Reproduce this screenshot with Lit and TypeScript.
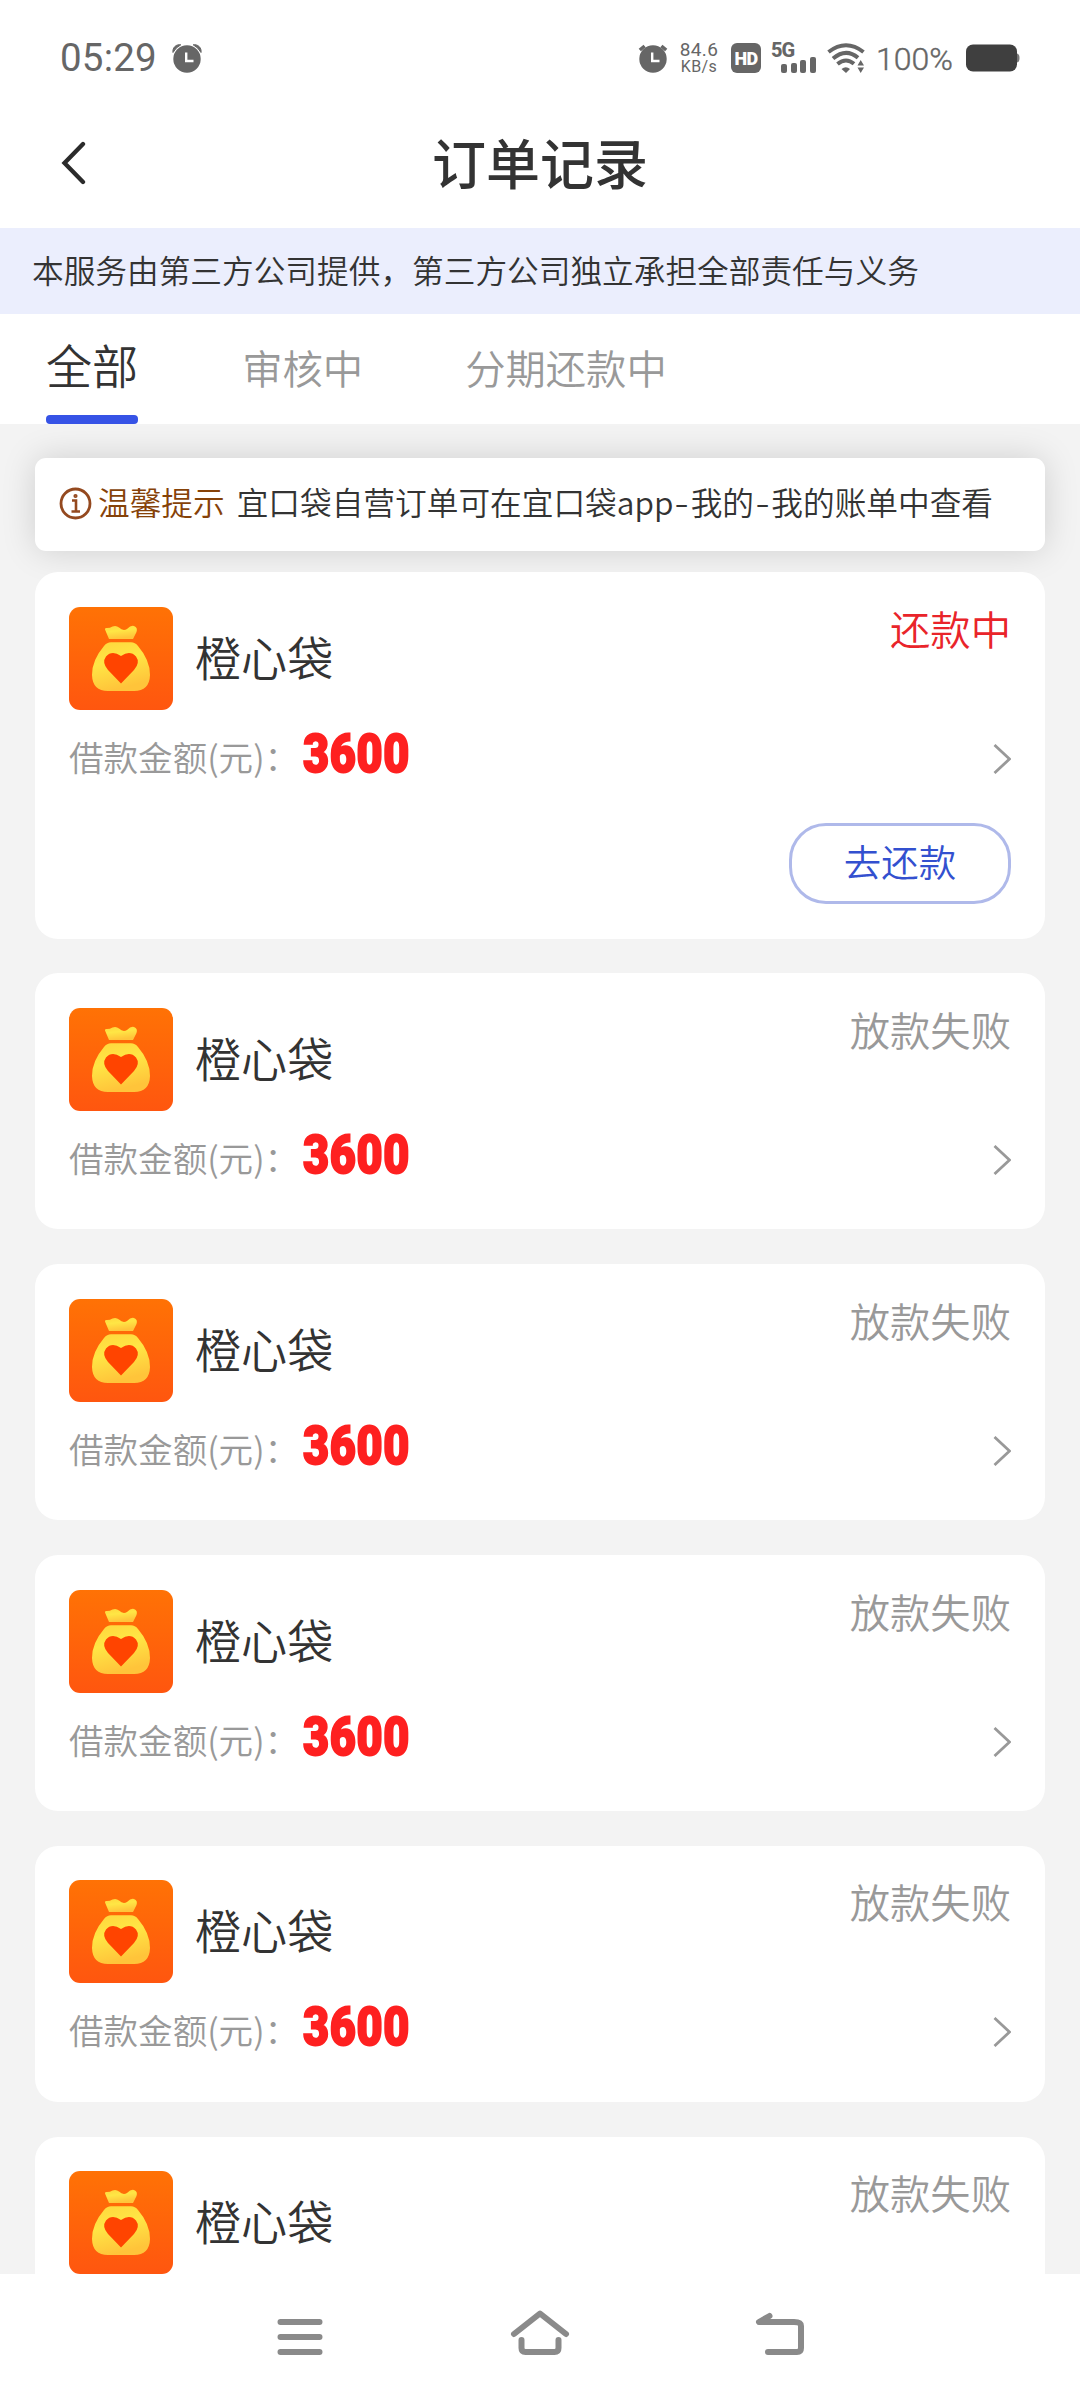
import { css, html, LitElement, nothing, svg } from "lit";
import { customElement, property, state } from "lit/decorators.js";
import { classMap } from "lit/directives/class-map.js";

interface Order {
  name: string;
  amount: number;
  status: string;
  repaying?: boolean;
}

const alarmIcon = (gap: boolean) => svg`
  <circle cx="15" cy="16" r="13.7" fill="currentColor"></circle>
  ${gap
    ? svg`<path d="M1 9.5A6.6 6.6 0 0 1 8.8 1.8Q4 4.2 1 9.5ZM29 9.5A6.6 6.6 0 0 0 21.2 1.8Q26 4.2 29 9.5Z" fill="currentColor" stroke="currentColor"></path>`
    : svg`<path d="M1.8 7 6.6 3M28.2 7 23.4 3" stroke="currentColor" stroke-width="3.4"></path>`}
  <path d="M14.2 9.5V18H21.5" fill="none" stroke="#fff" stroke-width="2.4"></path>
`;

@customElement("status-bar")
export class StatusBar extends LitElement {
  static styles = css`
    :host {
      display: flex;
      align-items: center;
      height: 116px;
      padding: 0 60px 0 60px;
      box-sizing: border-box;
      color: #666;
      font-family: Roboto, sans-serif;
      font-weight: 400;
    }

    svg {
      display: block;
      flex: none;
    }

    .time {
      width: 112px;
      font-size: 38.5px;
      line-height: 40px;
      letter-spacing: 0.2px;
    }

    .spacer {
      flex: 1;
    }

    .speed {
      display: flex;
      flex-direction: column;
      align-items: center;
      width: 42px;
      margin: 0 11px 0 10px;
      font-size: 19px;
      line-height: 17px;
      letter-spacing: 0.4px;
    }

    .speed .unit {
      font-size: 16px;
    }

    .hd {
      width: 30px;
      height: 30px;
      border-radius: 6px;
      background: #666;
      color: #fff;
      font-size: 18px;
      font-weight: 900;
      line-height: 31px;
      text-align: center;
      letter-spacing: -0.6px;
    }

    .signal {
      width: 46px;
      height: 30px;
      margin-left: 10px;
      display: flex;
      flex-direction: column;
    }

    .signal .gen {
      font-size: 20px;
      font-weight: 800;
      line-height: 14px;
      letter-spacing: -1px;
    }

    .bars {
      display: flex;
      align-items: flex-end;
      gap: 3.7px;
      margin-left: 10px;
    }

    .bar {
      width: 6px;
      border-radius: 2px;
      background: currentColor;
    }

    .wifi {
      margin-left: 10px;
    }

    .percent {
      width: 88px;
      margin-left: 11px;
      margin-right: 2px;
      font-size: 32px;
      line-height: 34px;
      padding-top: 2px;
      font-weight: 300;
      -webkit-text-stroke: 0.4px #666;
      box-sizing: border-box;
    }
  `;

  private _bars = [9, 10, 13, 16];

  protected render() {
    return html`
      <span class="time">05:29</span>
      <svg width="30" height="30" viewBox="0 0 30 30">${alarmIcon(true)}</svg>
      <span class="spacer"></span>
      <svg width="30" height="30" viewBox="0 0 30 30">${alarmIcon(false)}</svg>
      <span class="speed"><span>84.6</span><span class="unit">KB/s</span></span>
      <span class="hd">HD</span>
      <span class="signal">
        <span class="gen">5G</span>
        <span class="bars">
          ${this._bars.map((h) => html`<i class="bar" style="height:${h}px"></i>`)}
        </span>
      </span>
      <svg class="wifi" width="38" height="30" viewBox="0 0 38 30" fill="none">
        <path d="M1.500 9Q19 -4.500 36.500 9M6 15.500Q19 4.500 31 14.800M10.500 21Q19 14 27 20.800" stroke="currentColor" stroke-width="4"></path>
        <path d="M14.500 26Q19 22.500 23 26L19 30ZM30.500 22.500 33.700 17 37 22.500ZM30.500 24.500H37L33.700 30Z" fill="currentColor"></path>
      </svg>
      <span class="percent">100%</span>
      <svg width="54" height="28" viewBox="0 0 54 28">
        <path d="M48 9.500h2.500q3 0 3 4.500t-3 4.500H48Z" fill="#777"></path>
        <rect y="0.500" width="51" height="27" rx="7" fill="#3f3f3f"></rect>
      </svg>
    `;
  }
}

@customElement("order-card")
export class OrderCard extends LitElement {
  static styles = css`
    * {
      box-sizing: border-box;
    }

    :host {
      display: flex;
      flex-direction: column;
      height: 256.3px;
      padding: 34.7px 34px 0;
      border-radius: 23px;
      background: #fff;
      flex: none;
    }

    :host([repaying]) {
      height: 366.6px;
    }

    .head {
      display: flex;
      height: 104px;
    }

    .logo {
      display: block;
      flex: none;
    }

    .name {
      flex: 1;
      padding-left: 22px;
      font-size: 46.08px;
      line-height: 98px;
      color: #333;
    }

    .status {
      font-size: 40.32px;
      line-height: 42px;
      color: #999;
    }

    .status.active {
      color: #e9242a;
    }

    .detail {
      display: flex;
      align-items: center;
      height: 96px;
      font-size: 34.56px;
      color: #999;
    }

    .label {
      line-height: 50px;
      width: 234px;
      padding-bottom: 6px;
      white-space: nowrap;
    }

    .amount {
      flex: 1;
      font-family: Roboto, sans-serif;
      font-size: 53px;
      font-weight: 900;
      line-height: 60px;
      letter-spacing: 0.8px;
      color: #fe2020;
      -webkit-text-stroke: 2px #fe2020;
      transform: scaleX(0.85);
      transform-origin: left;
      margin-top: -10px;
    }

    .pay {
      align-self: flex-end;
      width: 222px;
      height: 81px;
      margin-top: 16.3px;
      padding: 0 0 5px;
      border: 3px solid #afb9ea;
      border-radius: 37px;
      background: #fff;
      color: #3350cf;
      font: inherit;
      font-size: 37.44px;
      line-height: 68px;
    }
  `;

  @property({ attribute: false })
  order!: Order;

  protected render() {
    const { name, amount, status, repaying } = this.order;
    return html`
      <div class="head">
        <svg class="logo" width="104" height="103" viewBox="0 0 104 103">
          <defs>
            <linearGradient id="tile" x1="0" y1="0" x2="0" y2="1">
              <stop offset="0" stop-color="#ff7205"></stop>
              <stop offset="1" stop-color="#ff560f"></stop>
            </linearGradient>
            <linearGradient id="bag" x1="0" y1="0" x2="0.300" y2="1">
              <stop offset="0" stop-color="#ffd63c"></stop>
              <stop offset="0.450" stop-color="#ffe645"></stop>
              <stop offset="1" stop-color="#ffc43a"></stop>
            </linearGradient>
          </defs>
          <rect width="104" height="103" rx="11" fill="url(#tile)"></rect>
          <path d="M40 32 36 22.500Q35.500 20.500 38 21Q41 21 43.500 19.500Q47 18 50 20.500Q54 24.500 58 22Q62 18 65 19Q69 20.500 67.500 25L64 32Z" fill="url(#bag)"></path>
          <path d="M42 35.300H62Q66 35.300 69 39Q81 53 81 68Q80.500 84 65 84H39Q23.500 84 23 68Q23 53 35 39Q38 35.300 42 35.300Z" fill="url(#bag)"></path>
          <path d="M52 76.500 39 63Q32.500 55.500 37 49.500Q43 43 52 49Q61 43 67 49.500Q71.500 55.500 65 63Z" fill="#ff4400"></path>
        </svg>
        <span class="name">${name}</span>
        <span class=${classMap({ status: true, active: !!repaying })}>${status}</span>
      </div>
      <div class="detail">
        <span class="label">借款金额(元)：</span>
        <span class="amount">${amount}</span>
        <svg width="18" height="30" viewBox="0 0 18 30" fill="none">
          <path d="M1.500 1 16.500 15 1.500 29" stroke="#999" stroke-width="2.800"></path>
        </svg>
      </div>
      ${repaying ? html`<button class="pay" type="button">去还款</button>` : nothing}
    `;
  }
}

@customElement("app-root")
export class AppRoot extends LitElement {
  static styles = css`
    * {
      box-sizing: border-box;
    }

    :host {
      display: flex;
      flex-direction: column;
      height: 2400px;
      overflow: hidden;
      background: #f3f3f3;
      color: #333;
      font-family: "Noto Sans CJK SC", sans-serif;
      font-weight: 350;
    }

    status-bar,
    .title-bar {
      background: #fff;
      flex: none;
    }

    .title-bar {
      display: grid;
      grid-template-columns: 120px 1fr 120px;
      align-items: center;
      height: 112px;
      padding-bottom: 20px;
    }

    .back {
      margin: 2px 0 0 61px;
    }

    h1 {
      margin: 0;
      font-size: 54px;
      font-weight: 500;
      line-height: 80px;
      text-align: center;
    }

    .notice {
      flex: none;
      height: 86px;
      padding-left: 32px;
      background: #ebeefd;
      font-size: 31.68px;
      line-height: 83px;
    }

    .tabs {
      flex: none;
      display: flex;
      height: 110px;
      padding-left: 46px;
      background: #fff;
      position: relative;
      z-index: 1;
    }

    .tab {
      display: flex;
      flex-direction: column;
      justify-content: space-between;
      margin-right: 102px;
      font-size: 40.32px;
      line-height: 105px;
      color: #999;
      cursor: pointer;
    }

    .tab.active {
      margin-right: 104px;
      font-size: 46.08px;
      line-height: 101px;
      color: #333;
    }

    .tab.active::after {
      content: "";
      height: 9px;
      border-radius: 4px;
      background: #3653e6;
    }

    .content {
      flex: 1;
      min-height: 0;
      overflow: hidden;
      padding: 34px 35px 0;
    }

    .tip {
      display: flex;
      align-items: center;
      height: 93px;
      padding-left: 24px;
      border-radius: 11px;
      background: #fff;
      box-shadow: 0 0 34px rgba(0, 0, 0, 0.15);
      font-size: 31.68px;
      line-height: 46px;
      white-space: nowrap;
    }

    .tip svg {
      margin: 0 6px 3px 0;
    }

    .tip .text {
      padding-bottom: 7px;
    }

    .tip b {
      margin-right: 12px;
      font-weight: inherit;
      color: #864208;
    }

    .dash {
      display: inline-block;
      width: 17.3px;
      text-align: center;
      transform: scaleX(1.3);
    }

    .orders {
      position: relative;
      display: flex;
      flex-direction: column;
      gap: 34.56px;
      margin-top: 21px;
    }

    .nav {
      flex: none;
      display: flex;
      justify-content: center;
      gap: 180px;
      height: 126px;
      padding-top: 32px;
      background: #fff;
    }

    .nav svg {
      fill: none;
      stroke: #8a8a8a;
      stroke-width: 6;
      stroke-linecap: round;
      stroke-linejoin: round;
    }
  `;

  @state()
  private _activeTab = 0;

  private _tabs = ["全部", "审核中", "分期还款中"];

  private _orders: Order[] = [
    { name: "橙心袋", amount: 3600, status: "还款中", repaying: true },
    ...Array.from({ length: 5 }, () => ({
      name: "橙心袋",
      amount: 3600,
      status: "放款失败",
    })),
  ];

  protected render() {
    return html`
      <status-bar></status-bar>
      <header class="title-bar">
        <svg class="back" width="26" height="44" viewBox="0 0 26 44" fill="none">
          <path d="M22 3 3.500 22 22 41" stroke="#2b2b2b" stroke-width="4.300" stroke-linecap="round"></path>
        </svg>
        <h1>订单记录</h1>
      </header>
      <div class="notice">本服务由第三方公司提供，第三方公司独立承担全部责任与义务</div>
      <nav class="tabs">
        ${this._tabs.map(
          (label, i) => html`
            <span
              class=${classMap({ tab: true, active: i === this._activeTab })}
              @click=${() => (this._activeTab = i)}
              >${label}</span
            >
          `
        )}
      </nav>
      <main class="content">
        <div class="tip">
          <svg width="33" height="33" viewBox="0 0 33 33" fill="none" stroke="#94491f">
            <circle cx="16.500" cy="16.500" r="14.500" stroke-width="2.800"></circle>
            <path d="M13 13.500H17V24M12.500 24.500H21" stroke-width="2.600"></path>
            <circle cx="16.500" cy="9" r="1.200" stroke-width="1.800"></circle>
          </svg>
          <span class="text"><b>温馨提示</b>宜口袋自营订单可在宜口袋app<span class="dash">-</span>我的<span class="dash">-</span>我的账单中查看</span>
        </div>
        <div class="orders">
          ${this._orders.map(
            (order) => html`<order-card .order=${order} ?repaying=${order.repaying}></order-card>`
          )}
        </div>
      </main>
      <footer class="nav">
        <svg width="60" height="60" viewBox="0 0 60 60">
          <path d="M10.500 16H49.500M10.500 31H49.500M10.500 46H49.500"></path>
        </svg>
        <svg width="60" height="60" viewBox="0 0 60 60">
          <path d="M4 28 30 7.500 56 28M11.500 34V42Q11.500 46 15.500 46H44.500Q48.500 46 48.500 42V34"></path>
        </svg>
        <svg width="60" height="60" viewBox="0 0 60 60">
          <path d="M19.500 10 9 16H44Q51 16 51 20V42Q51 46 47 46H18"></path>
        </svg>
      </footer>
    `;
  }
}

declare global {
  interface HTMLElementTagNameMap {
    "status-bar": StatusBar;
    "order-card": OrderCard;
    "app-root": AppRoot;
  }
}
